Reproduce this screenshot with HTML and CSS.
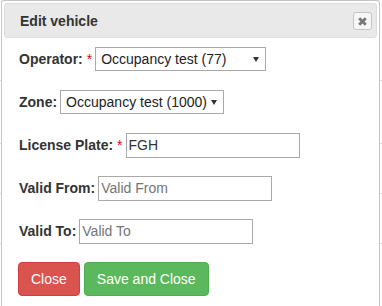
FILE: index.html
```html
<!DOCTYPE html>
<html>
<head>
<meta charset="utf-8">
<link rel="stylesheet" href="styles.css">
</head>
<body>
<div class="page">
  <div class="page-row r1"></div>
  <div class="page-row r2"></div>
  <div class="page-row r3"></div>
  <div class="page-row r4"></div>
</div>
<div class="dialog">
  <div class="titlebar">
    <span class="title">Edit vehicle</span>
    <button class="close-x" type="button" aria-label="Close">
      <svg width="9" height="9" viewBox="0 0 9 9"><path d="M1.2 1.2 L7.8 7.8 M7.8 1.2 L1.2 7.8" stroke="#777" stroke-width="2.8" stroke-linecap="butt"/></svg>
    </button>
  </div>
  <form class="form">
    <div class="row">
      <label class="lbl">Operator: <span class="req">*</span></label>
      <div class="select w1"><span>Occupancy test (77)</span><svg width="6" height="5" viewBox="0 0 6 5"><path d="M0 0 H6 L3 5 Z" fill="#333"/></svg></div>
    </div>
    <div class="row">
      <label class="lbl">Zone:</label>
      <div class="select w2"><span>Occupancy test (1000)</span><svg width="6" height="5" viewBox="0 0 6 5"><path d="M0 0 H6 L3 5 Z" fill="#333"/></svg></div>
    </div>
    <div class="row">
      <label class="lbl">License Plate: <span class="req">*</span></label>
      <input class="txt" type="text" value="FGH">
    </div>
    <div class="row">
      <label class="lbl">Valid From:</label>
      <input class="txt" type="text" placeholder="Valid From">
    </div>
    <div class="row">
      <label class="lbl">Valid To:</label>
      <input class="txt" type="text" placeholder="Valid To">
    </div>
    <div class="actions">
      <button type="button" class="btn btn-danger">Close</button>
      <button type="button" class="btn btn-success">Save and Close</button>
    </div>
  </form>
</div>
</body>
</html>
```
FILE: styles.css
```css
* { box-sizing: border-box; }
html, body { margin: 0; padding: 0; background: #fff; }
body {
  font-family: "Liberation Sans", Arial, sans-serif;
  font-size: 14px;
  color: #333;
  width: 382px;
  height: 306px;
  overflow: hidden;
  position: relative;
}
.page { padding-top: 80px; }
.page-row { border-top: 1px solid #dddddd; }
.r1 { height: 63px; }
.r2 { height: 50px; }
.r3 { height: 50px; }
.r4 { height: 50px; }

.dialog {
  position: absolute;
  left: 1px;
  top: 0;
  width: 379px;
  height: 306px;
  background: #fff;
  border: 1px solid #c5c5c5;
  border-bottom-width: 0;
  border-radius: 3px 3px 0 0;
  padding: 2px;
}
.titlebar {
  height: 35px;
  background: #e9e9e9;
  border: 1px solid #dddddd;
  border-radius: 3px;
  display: flex;
  align-items: center;
  justify-content: space-between;
  padding: 0 4px 0 15px;
}
.title { font-weight: bold; font-size: 14px; color: #333; }
.close-x {
  width: 19px;
  height: 18px;
  margin-top: 1px;
  padding: 0;
  border: 1px solid #c5c5c5;
  border-radius: 3px;
  background: #f6f6f6;
  display: flex;
  align-items: center;
  justify-content: center;
}
.form {
  padding: 8px 0 0 15px;
  display: flex;
  flex-direction: column;
  gap: 17px;
}
.row {
  height: 26px;
  display: flex;
  align-items: center;
  gap: 3px;
}
.lbl { font-weight: bold; white-space: pre; }
.req { color: #e60000; font-weight: normal; }
.select {
  height: 24px;
  border: 1px solid #a9a9a9;
  background: #fff;
  display: flex;
  align-items: center;
  justify-content: space-between;
  padding: 0 6px 0 5px;
  color: #222;
}
.w1 { width: 171px; }
.w2 { width: 164px; }
.txt {
  width: 174px;
  height: 25px;
  border: 1px solid #a9a9a9;
  padding: 0 2px;
  margin: 0;
  font-family: "Liberation Sans", Arial, sans-serif;
  font-size: 14px;
  color: #333;
  outline: none;
}
.txt::placeholder { color: #757575; opacity: 1; }
.actions {
  display: flex;
  gap: 4px;
  margin-top: 1px;
  margin-left: -1px;
}
.btn {
  height: 34px;
  padding: 6px 12px;
  font-family: "Liberation Sans", Arial, sans-serif;
  font-size: 14px;
  line-height: 20px;
  color: #fff;
  border-radius: 4px;
  border: 1px solid transparent;
}
.btn-danger { background: #d9534f; border-color: #d43f3a; }
.btn-success { background: #5cb85c; border-color: #4cae4c; }
```
